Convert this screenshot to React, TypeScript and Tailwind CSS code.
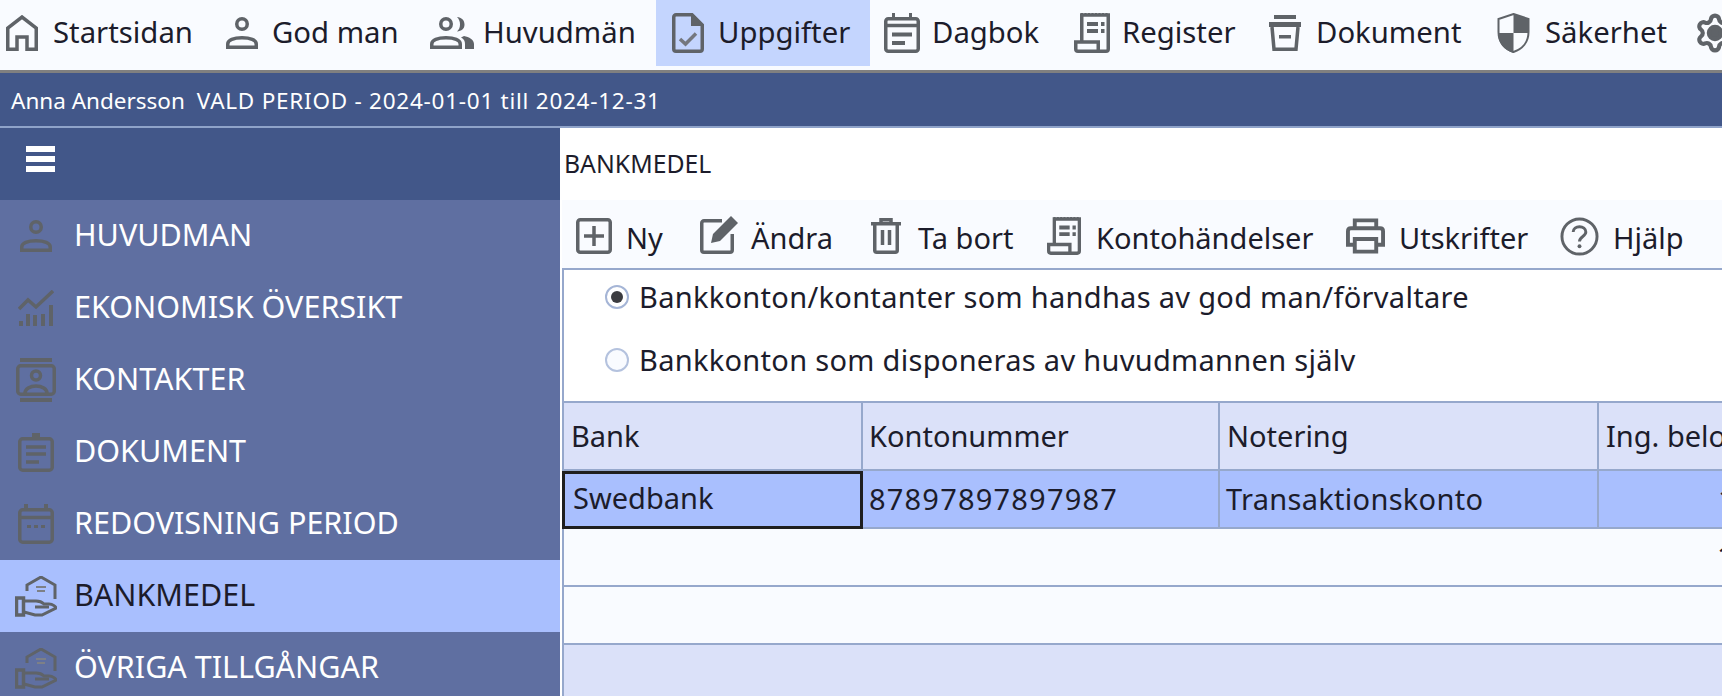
import React from 'react';
import { Settings } from 'lucide-react';

const gray = '#5f6368';

type IconProps = { className?: string };

// top bar + toolbar icons
const HomeIcon = ({ className }: IconProps) => (
  <svg viewBox="0 0 32 36" className={className} fill="none" stroke={gray} strokeWidth="3.500">
    <path d="M1.750 34.250V13L16 2l14.250 11v21.250H21V22H11v12.250z" />
  </svg>
);

const PersonIcon = ({ className }: IconProps) => (
  <svg viewBox="0 0 32 32" className={className} fill="none" stroke={gray} strokeWidth="3.500">
    <circle cx="16" cy="7" r="5.250" />
    <path d="M1.750 30.250V27c0-4 6-6.250 14.250-6.250S30.250 23 30.250 27v3.250z" />
  </svg>
);

const PeopleIcon = ({ className }: IconProps) => (
  <svg viewBox="0 0 44 32" className={className} fill="none" stroke={gray} strokeWidth="3.500">
    <circle cx="16" cy="7" r="5.250" />
    <path d="M1.750 30.250V27c0-4 6-6.250 14.250-6.250S30.250 23 30.250 27v3.250z" />
    <path d="M27 0c4.500.5 7.500 3 7.500 7.500S31.500 14 27 14.500c2-2 3-4 3-7S29 2 27 0z" fill={gray} stroke="none" />
    <path d="M34 19c5 1 10 3.500 10 8v5h-9v-5c0-3-1-5-4-6.500z" fill={gray} stroke="none" />
  </svg>
);

const TaskIcon = ({ className }: IconProps) => (
  <svg viewBox="0 0 32 40" className={className} fill="none" stroke={gray} strokeWidth="3.500">
    <path d="M4 1.750H20L30.250 12v24a2.250 2.250 0 0 1-2.250 2.250H4A2.250 2.250 0 0 1 1.750 36V4A2.250 2.250 0 0 1 4 1.750z" />
    <path d="M19 1.500V13h11.500z" fill={gray} stroke="none" />
    <path d="M8 26l5.500 5L24 20.500" stroke="#74777e" />
  </svg>
);

const DiaryIcon = ({ className }: IconProps) => (
  <svg viewBox="0 0 36 40" className={className} fill="none" stroke={gray} strokeWidth="3.500">
    <rect x="1.750" y="5.750" width="32.500" height="32.500" rx="2.500" />
    <path d="M1.750 12.500h32.500" />
    <path d="M8 0h3v6H8zM25 0h3v6h-3z" fill={gray} stroke="none" />
    <path d="M8 21.500h20M8 30h13" strokeWidth="4" />
  </svg>
);

const ReceiptIcon = ({ className }: IconProps) => (
  <svg viewBox="0 0 36 40" className={className} fill="none" stroke={gray} strokeWidth="3.500">
    <path d="M7.750 29V2h26.500v34c0 1.500-1 2.250-2.250 2.250H4c-1.500 0-2.250-1-2.250-2.250v-7h22.500v9" />
    <path d="M7 1h28" strokeDasharray="2 1.500" strokeWidth="2.500" />
    <path d="M13 11h11M13 18h11" strokeWidth="4" />
    <path d="M27 9h3.500v4H27zM27 16h3.500v4H27z" fill={gray} stroke="none" />
  </svg>
);

const ArchiveIcon = ({ className }: IconProps) => (
  <svg viewBox="0 0 36 36" className={className} fill="none" stroke={gray}>
    <path d="M7 0h22v4H7zM2 7h32v5H2z" fill={gray} stroke="none" />
    <path d="M5 12l2 22.250h22l2-22.250" strokeWidth="3.500" />
    <path d="M12 20h12v3.500H12z" fill={gray} stroke="none" />
  </svg>
);

const ShieldIcon = ({ className }: IconProps) => (
  <svg viewBox="0 0 33 40" className={className} fill="none">
    <path d="M16.500 1L31.500 6v13c0 10-6 17-15 20-9-3-15-10-15-20V6z" stroke={gray} strokeWidth="2" fill="#f9fbff" />
    <path d="M16.500 1L32 6v14H16.500zM16.500 20v20C7 37 1 30 1 20z" fill={gray} />
  </svg>
);

const PlusBoxIcon = ({ className }: IconProps) => (
  <svg viewBox="0 0 36 36" className={className} fill="none" stroke={gray} strokeWidth="3.500">
    <rect x="1.750" y="1.750" width="32.500" height="32.500" rx="2.500" />
    <path d="M18 8v20M8 18h20" />
  </svg>
);

const EditIcon = ({ className }: IconProps) => (
  <svg viewBox="0 0 39 39" className={className} fill="none" stroke={gray} strokeWidth="3.500">
    <path d="M22 5.750H4A2.250 2.250 0 0 0 1.750 8v27A2.250 2.250 0 0 0 4 37.250h26a2.250 2.250 0 0 0 2.250-2.250V19" />
    <path d="M11 28l2-9L31 1l7 7-18 18z" fill={gray} stroke="none" />
  </svg>
);

const TrashIcon = ({ className }: IconProps) => (
  <svg viewBox="0 0 30 36" className={className} fill="none" stroke={gray} strokeWidth="3.500">
    <path d="M0 5.750h30M10 4V1.750h10V4" />
    <path d="M3.750 6v26.500A2 2 0 0 0 5.750 34.250h18.500a2 2 0 0 0 2-2V6" />
    <path d="M11.500 12v15M18.500 12v15" />
  </svg>
);

const PrinterIcon = ({ className }: IconProps) => (
  <svg viewBox="0 0 40 36" className={className} fill="none" stroke={gray} strokeWidth="4">
    <path d="M9 10V2h22v8" />
    <path d="M9 27H2V13c0-2 1-3 3-3h30c2 0 3 1 3 3v14h-7" />
    <path d="M9 21h22v13H9z" />
  </svg>
);

const HelpIcon = ({ className }: IconProps) => (
  <svg viewBox="0 0 40 40" className={className} fill="none" stroke={gray} strokeWidth="3">
    <circle cx="20" cy="20" r="18" />
    <path d="M13.500 15.500c0-3.500 3-5.500 6.500-5.500s6.500 2 6.500 5.500c0 4.500-6.500 4.500-6.500 9.500" />
    <circle cx="20" cy="30" r="2" fill={gray} stroke="none" />
  </svg>
);

// sidebar icons
const ChartIcon = ({ className }: IconProps) => (
  <svg viewBox="0 0 36 36" className={className} fill="none" stroke={gray}>
    <path d="M1 19l9-9 8 7L35 1" strokeWidth="3.500" />
    <path d="M1 31h4v5H1zM8 24h4v12H8zM15 25h4v11h-4zM23 24h4v12h-4zM31 15h4v21h-4z" fill={gray} stroke="none" />
  </svg>
);

const ContactIcon = ({ className }: IconProps) => (
  <svg viewBox="0 0 40 44" className={className} fill="none" stroke={gray} strokeWidth="3.500">
    <path d="M4 0h32v4H4zM4 40h32v4H4z" fill={gray} stroke="none" />
    <rect x="1.750" y="7.750" width="36.500" height="28.500" rx="3" />
    <circle cx="20" cy="17.500" r="4.500" />
    <path d="M9 35c0-4 5-7 11-7s11 3 11 7" />
  </svg>
);

const ClipboardIcon = ({ className }: IconProps) => (
  <svg viewBox="0 0 36 39" className={className} fill="none" stroke={gray} strokeWidth="3.500">
    <rect x="1.750" y="5.750" width="32.500" height="31.500" rx="3" />
    <path d="M14 0h8v5h-8z" fill={gray} stroke="none" />
    <path d="M8 14h20M8 21h20M8 29h13" />
  </svg>
);

const CalendarIcon = ({ className }: IconProps) => (
  <svg viewBox="0 0 36 40" className={className} fill="none" stroke={gray} strokeWidth="3.500">
    <rect x="1.750" y="5.750" width="32.500" height="32.500" rx="3" />
    <path d="M1.750 13.500h32.500" />
    <path d="M6 0h4v6H6zM26 0h4v6h-4zM9 21h4v3H9zM16 21h4v3h-4zM23 21h4v3h-4z" fill={gray} stroke="none" />
  </svg>
);

const BankHandIcon = ({ className }: IconProps) => (
  <svg viewBox="0 0 42 41" className={className} fill="none" stroke={gray} strokeWidth="3">
    <path d="M12 15V9L26 1l14 8v14" />
    <path d="M21 11h10M22 15h8" strokeWidth="2" stroke="#7d8087" />
    <path d="M1.500 22h7v17h-7z" strokeWidth="3.500" />
    <path d="M9 25h12c3 0 6 1 8 3h5c4 0 7 3 7 4l-14 7H20l-11-3" />
    <path d="M20 31h14" />
  </svg>
);

const topItems = [
  { label: 'Startsidan', Icon: HomeIcon, iconClass: 'w-8 h-9', boxClass: 'w-[210px] pl-[6px] gap-[15px]' },
  { label: 'God man', Icon: PersonIcon, iconClass: 'w-8 h-8', boxClass: 'w-[204px] pl-4 gap-[14px]' },
  { label: 'Huvudmän', Icon: PeopleIcon, iconClass: 'w-11 h-8', boxClass: 'w-[242px] pl-4 gap-[9px]' },
  { label: 'Uppgifter', Icon: TaskIcon, iconClass: 'w-8 h-10', boxClass: 'w-[214px] pl-4 gap-[14px] bg-[#c4d5fe]' },
  { label: 'Dagbok', Icon: DiaryIcon, iconClass: 'w-9 h-10', boxClass: 'w-[188px] pl-[14px] gap-3' },
  { label: 'Register', Icon: ReceiptIcon, iconClass: 'w-9 h-10', boxClass: 'w-[193px] pl-4 gap-3' },
  { label: 'Dokument', Icon: ArchiveIcon, iconClass: 'w-9 h-9', boxClass: 'w-[230px] pl-4 gap-[13px]' },
  { label: 'Säkerhet', Icon: ShieldIcon, iconClass: 'w-[33px] h-10', boxClass: 'w-[199px] pl-4 gap-[15px]' },
];

const sideItems = [
  { label: 'HUVUDMAN', Icon: PersonIcon, iconClass: 'w-8 h-8' },
  { label: 'EKONOMISK ÖVERSIKT', Icon: ChartIcon, iconClass: 'w-9 h-9' },
  { label: 'KONTAKTER', Icon: ContactIcon, iconClass: 'w-10 h-11' },
  { label: 'DOKUMENT', Icon: ClipboardIcon, iconClass: 'w-9 h-[39px]' },
  { label: 'REDOVISNING PERIOD', Icon: CalendarIcon, iconClass: 'w-9 h-10' },
  { label: 'BANKMEDEL', Icon: BankHandIcon, iconClass: 'w-[42px] h-[41px]', active: true },
  { label: 'ÖVRIGA TILLGÅNGAR', Icon: BankHandIcon, iconClass: 'w-[42px] h-[41px]' },
];

const toolItems = [
  { label: 'Ny', Icon: PlusBoxIcon, iconClass: 'w-9 h-9', boxClass: 'w-[124px] gap-[14px]' },
  { label: 'Ändra', Icon: EditIcon, iconClass: 'w-[39px] h-[39px] -mt-1', boxClass: 'w-[171px] gap-3' },
  { label: 'Ta bort', Icon: TrashIcon, iconClass: 'w-[30px] h-9', boxClass: 'w-[176px] gap-[17px]' },
  { label: 'Kontohändelser', Icon: ReceiptIcon, iconClass: 'w-[34px] h-10', boxClass: 'w-[299px] gap-[15px]' },
  { label: 'Utskrifter', Icon: PrinterIcon, iconClass: 'w-[39px] h-9', boxClass: 'w-[214px] gap-[14px]' },
  { label: 'Hjälp', Icon: HelpIcon, iconClass: 'w-[39px] h-[39px]', boxClass: 'gap-[14px]' },
];

const App: React.FC = () => {
  return (
    <div className="w-[1722px] h-[696px] overflow-hidden flex flex-col bg-white text-[#1c1c2b] font-['Noto_Sans',sans-serif]">
      {/* Top menu */}
      <div className="h-[73px] shrink-0 flex items-start bg-[#f9fbff] border-b-[3px] border-[#808080] text-[29.300px] overflow-hidden">
        {topItems.map(({ label, Icon, iconClass, boxClass }) => (
          <div key={label} className={`h-[66px] shrink-0 flex items-center ${boxClass}`}>
            <Icon className={`${iconClass} shrink-0`} />
            <span className="whitespace-nowrap">{label}</span>
          </div>
        ))}
        <div className="h-[66px] shrink-0 flex items-center pl-[14px]">
          <Settings size={42} color={gray} strokeWidth={2.4}>
            <circle cx="12" cy="12" r="3.500" fill={gray} />
          </Settings>
        </div>
      </div>

      {/* Person and period */}
      <div className="h-[55px] shrink-0 flex items-center pl-[11px] pt-[2px] gap-[12px] bg-[#425789] border-b-2 border-[#8fa3c9] text-white text-[22.500px]">
        <span className="whitespace-nowrap">Anna Andersson</span>
        <span className="whitespace-nowrap tracking-[0.75px]">VALD PERIOD - 2024-01-01 till 2024-12-31</span>
      </div>

      <div className="flex-1 flex min-h-0">
        {/* Sidebar */}
        <div className="w-[560px] shrink-0 flex flex-col bg-[#5f6fa1] text-white text-[30.500px]">
          <div className="h-[72px] shrink-0 flex items-center pl-[26px] pb-[10px] bg-[#425789]">
            <div className="w-[29px] flex flex-col gap-1">
              <div className="h-[6px] bg-white" />
              <div className="h-[6px] bg-white" />
              <div className="h-[6px] bg-white" />
            </div>
          </div>
          {sideItems.map(({ label, Icon, iconClass, active }) => (
            <div
              key={label}
              className={`h-[72px] shrink-0 flex items-center ${active ? 'bg-[#a9bffe] text-[#1c1c2b]' : ''}`}
            >
              <div className="w-[74px] pr-[2px] flex justify-center shrink-0">
                <Icon className={iconClass} />
              </div>
              <span className="whitespace-nowrap pb-[2px]">{label}</span>
            </div>
          ))}
        </div>

        {/* Content */}
        <div className="flex-1 min-w-0 flex flex-col pl-[2px]">
          <div className="h-[72px] shrink-0 flex items-center pl-[2px] pb-[1px] text-[24.800px]">BANKMEDEL</div>

          <div className="h-[68px] shrink-0 flex items-center pl-[14px] pt-[4px] bg-[#f9fbff] text-[29px]">
            {toolItems.map(({ label, Icon, iconClass, boxClass }) => (
              <div key={label} className={`shrink-0 flex items-center ${boxClass}`}>
                <Icon className={`${iconClass} shrink-0`} />
                <span className="whitespace-nowrap pt-[3px]">{label}</span>
              </div>
            ))}
          </div>

          <div className="flex-1 min-h-0 flex flex-col border-t-2 border-l-2 border-[#96a8cc]">
            <div className="h-[131px] shrink-0 flex flex-col pt-[15px] gap-[39px] pl-[41px] text-[29px] tracking-[0.3px] leading-[24px]">
              <div className="flex items-center gap-[10px]">
                <div className="w-6 h-6 rounded-full border-2 border-[#a5b5d6] flex items-center justify-center">
                  <div className="w-3 h-3 rounded-full bg-[#3c3c40]" />
                </div>
                <span className="whitespace-nowrap">Bankkonton/kontanter som handhas av god man/förvaltare</span>
              </div>
              <div className="flex items-center gap-[10px]">
                <div className="w-6 h-6 rounded-full border-2 border-[#b4c2de] bg-[#f9fbff]" />
                <span className="whitespace-nowrap">Bankkonton som disponeras av huvudmannen själv</span>
              </div>
            </div>

            <div className="h-[70px] shrink-0 grid grid-cols-[299px_357px_379px_1fr] bg-[#dbe1f9] border-t-2 border-b-2 border-[#96a8cc] text-[29px]">
              <div className="flex items-center pl-[7px] border-r-2 border-[#96a8cc]">Bank</div>
              <div className="flex items-center pl-[6px] border-r-2 border-[#96a8cc]">Kontonummer</div>
              <div className="flex items-center pl-[7px] border-r-2 border-[#96a8cc]">Notering</div>
              <div className="flex items-center pl-[7px] whitespace-nowrap overflow-hidden">Ing. belopp</div>
            </div>

            <div className="h-[58px] shrink-0 grid grid-cols-[299px_357px_379px_1fr] bg-[#a9bffe] border-b-2 border-[#96a8cc] text-[29px]">
              <div className="h-[58px] -ml-[2px] flex items-center pl-[8px] pb-[4px] border-[3px] border-[#1f1f1f]">Swedbank</div>
              <div className="flex items-center pl-[6px] pb-[3px] tracking-[1.200px] border-r-2 border-[#96a8cc]">87897897897987</div>
              <div className="flex items-center pl-[6px] pb-[3px] tracking-[0.300px] border-r-2 border-[#96a8cc]">Transaktionskonto</div>
              <div className="flex items-center pl-[119px] pb-[3px] whitespace-nowrap overflow-hidden">1 000,00</div>
            </div>

            <div className="h-[58px] shrink-0 flex items-center pl-[1153px] pb-[3px] bg-[#f9fbff] border-b-2 border-[#96a8cc] text-[29px] whitespace-nowrap overflow-hidden">
              1 000,00
            </div>
            <div className="h-[58px] shrink-0 bg-[#f9fbff] border-b-2 border-[#96a8cc]" />
            <div className="flex-1 bg-[#dbe1f9]" />
          </div>
        </div>
      </div>
    </div>
  );
};

export default App;
